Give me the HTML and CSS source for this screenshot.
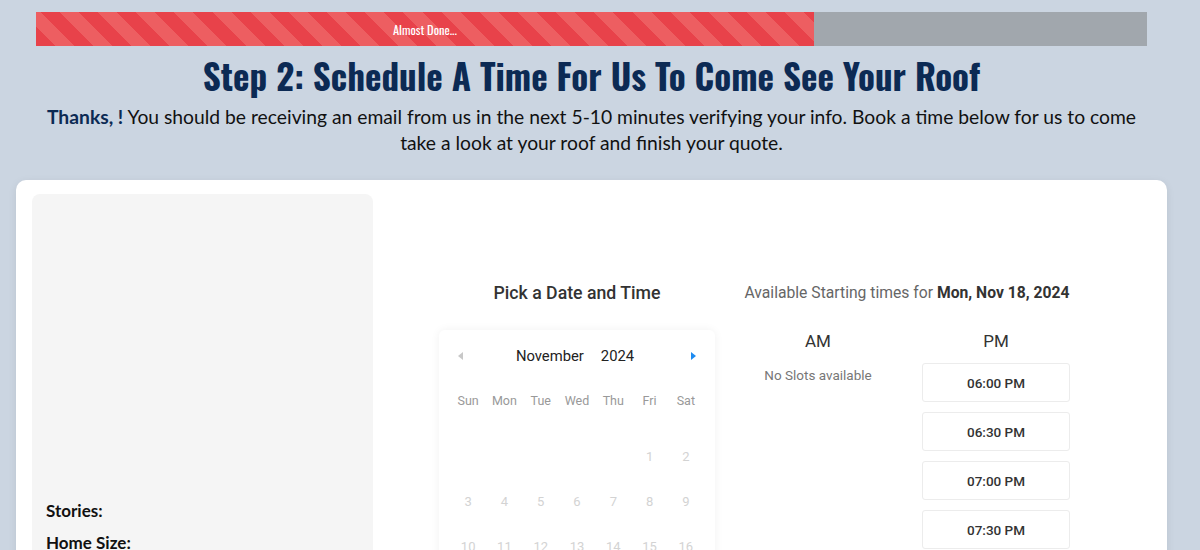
FILE: index.html
```html
<!DOCTYPE html>
<html lang="en">
<head>
<meta charset="utf-8">
<title>Step 2: Schedule A Time</title>
<link rel="stylesheet" href="styles.css">
</head>
<body>
<div class="page">
  <div class="progress">
    <div class="progress-fill" style="width:70%"><span>Almost Done...</span></div>
  </div>
  <h1 class="title">Step 2: Schedule A Time For Us To Come See Your Roof</h1>
  <p class="lead"><strong>Thanks, !</strong> You should be receiving an email from us in the next 5-10 minutes verifying your info. Book a time below for us to come take a look at your roof and finish your quote.</p>

  <div class="card">
    <aside class="summary">
      <div class="summary-media"></div>
      <div class="summary-row">Stories:</div>
      <div class="summary-row">Home Size:</div>
    </aside>

    <main class="booking">
      <section class="cal-col">
        <h2 class="cal-title">Pick a Date and Time</h2>
        <div class="calendar">
          <div class="cal-head">
            <span class="arrow arrow-left"></span>
            <div class="cal-month"><span>November</span><span>2024</span></div>
            <span class="arrow arrow-right"></span>
          </div>
          <div class="cal-grid weekdays">
            <span>Sun</span><span>Mon</span><span>Tue</span><span>Wed</span><span>Thu</span><span>Fri</span><span>Sat</span>
          </div>
          <div class="cal-grid days">
            <span></span><span></span><span></span><span></span><span></span><span>1</span><span>2</span>
            <span>3</span><span>4</span><span>5</span><span>6</span><span>7</span><span>8</span><span>9</span>
            <span>10</span><span>11</span><span>12</span><span>13</span><span>14</span><span>15</span><span>16</span>
          </div>
        </div>
      </section>

      <section class="time-col">
        <div class="time-title">Available Starting times for <b>Mon, Nov 18, 2024</b></div>
        <div class="slots">
          <div class="slot-col">
            <div class="slot-head">AM</div>
            <div class="no-slots">No Slots available</div>
          </div>
          <div class="slot-col">
            <div class="slot-head">PM</div>
            <div class="slot">06:00 PM</div>
            <div class="slot">06:30 PM</div>
            <div class="slot">07:00 PM</div>
            <div class="slot">07:30 PM</div>
          </div>
        </div>
      </section>
    </main>
  </div>
</div>
</body>
</html>
```

FILE: styles.css
```css
* { box-sizing: border-box; }

html, body {
  margin: 0;
  background: #cbd5e1;
}

body {
  font-family: Lato, "Liberation Sans", sans-serif;
  color: #1a1a1a;
  overflow: hidden;
}

.page {
  width: 1183px;
  padding: 12px 16px 0;
}

.progress {
  margin: 0 20px;
  height: 34px;
  background: #a1a7ad;
  display: flex;
}

.progress-fill {
  height: 100%;
  background: repeating-linear-gradient(45deg, #e8424a 0, #e8424a 13.5px, #ed5e61 13.5px, #ed5e61 27px);
  display: flex;
  align-items: center;
  justify-content: center;
}

.progress-fill span {
  font-family: Oswald, "Liberation Sans Narrow", "DejaVu Sans Condensed", sans-serif;
  color: #fff;
  font-size: 12.5px;
  font-weight: 400;
}

.title {
  margin: 9px 0 0;
  text-align: center;
  font-family: Oswald, "Liberation Sans Narrow", "DejaVu Sans Condensed", sans-serif;
  font-weight: 700;
  font-size: 35px;
  line-height: 40px;
  color: #0c2a54;
}

.lead {
  margin: 9px 0 0;
  padding: 0 25px;
  text-align: center;
  font-size: 19.3px;
  line-height: 26px;
  color: #111;
}

.lead strong {
  color: #0c2a54;
  font-weight: 700;
}

.card {
  margin-top: 24px;
  background: #fff;
  border-radius: 10px;
  box-shadow: 0 2px 8px rgba(0, 0, 0, 0.08);
  padding: 14px 16px;
  display: flex;
  min-height: 420px;
}

.summary {
  width: 341px;
  flex: none;
  background: #f5f5f5;
  border-radius: 8px;
  padding: 0 14px;
  display: flex;
  flex-direction: column;
  min-height: 400px;
}

.summary-media {
  height: 306px;
}

.summary-row {
  font-weight: 700;
  font-size: 17px;
  line-height: 22px;
  color: #111;
  margin-bottom: 10px;
}

.booking {
  flex: 1;
  display: flex;
  justify-content: center;
  gap: 14px;
  padding-top: 87px;
  font-family: Roboto, "Liberation Sans", sans-serif;
}

.cal-col {
  width: 276px;
}

.cal-title {
  margin: 0 0 25px;
  text-align: center;
  font-size: 17.7px;
  line-height: 24px;
  font-weight: 500;
  color: #333;
}

.calendar {
  border-radius: 6px;
  box-shadow: 0 0 10px rgba(0, 0, 0, 0.06);
  padding: 0 11px 10px;
  min-height: 240px;
}

.cal-head {
  height: 52px;
  display: flex;
  align-items: center;
  justify-content: space-between;
  padding: 0 8px;
}

.cal-month {
  display: flex;
  gap: 17px;
  font-size: 14.8px;
  color: #222;
  margin-left: -4px;
}

.arrow {
  width: 0;
  height: 0;
  border-top: 4px solid transparent;
  border-bottom: 4px solid transparent;
}

.arrow-left { border-right: 5px solid #c8c8c8; }
.arrow-right { border-left: 5px solid #1d8bf1; }

.cal-grid {
  display: grid;
  grid-template-columns: repeat(7, 1fr);
  text-align: center;
}

.weekdays {
  height: 36px;
  align-items: center;
  font-size: 12.5px;
  color: #999;
  margin-bottom: 16px;
}

.days {
  grid-auto-rows: 45px;
  align-items: center;
  font-size: 13px;
  color: #d3d3d3;
}

.time-col {
  width: 356px;
}

.time-title {
  text-align: center;
  font-size: 15.7px;
  line-height: 24px;
  color: #666;
  margin-bottom: 24px;
}

.time-title b {
  color: #333;
  font-weight: 700;
}

.slots {
  display: grid;
  grid-template-columns: 1fr 1fr;
}

.slot-col {
  display: flex;
  flex-direction: column;
  align-items: center;
}

.slot-head {
  font-size: 17px;
  line-height: 24px;
  color: #333;
  margin-bottom: 10px;
}

.no-slots {
  font-size: 13.5px;
  line-height: 16px;
  color: #777;
  margin-top: 4px;
}

.slot {
  width: 148px;
  height: 39px;
  border: 1px solid #ececec;
  border-radius: 3px;
  display: flex;
  align-items: center;
  justify-content: center;
  font-size: 13.5px;
  font-weight: 500;
  color: #333;
  margin-bottom: 10px;
}
```
